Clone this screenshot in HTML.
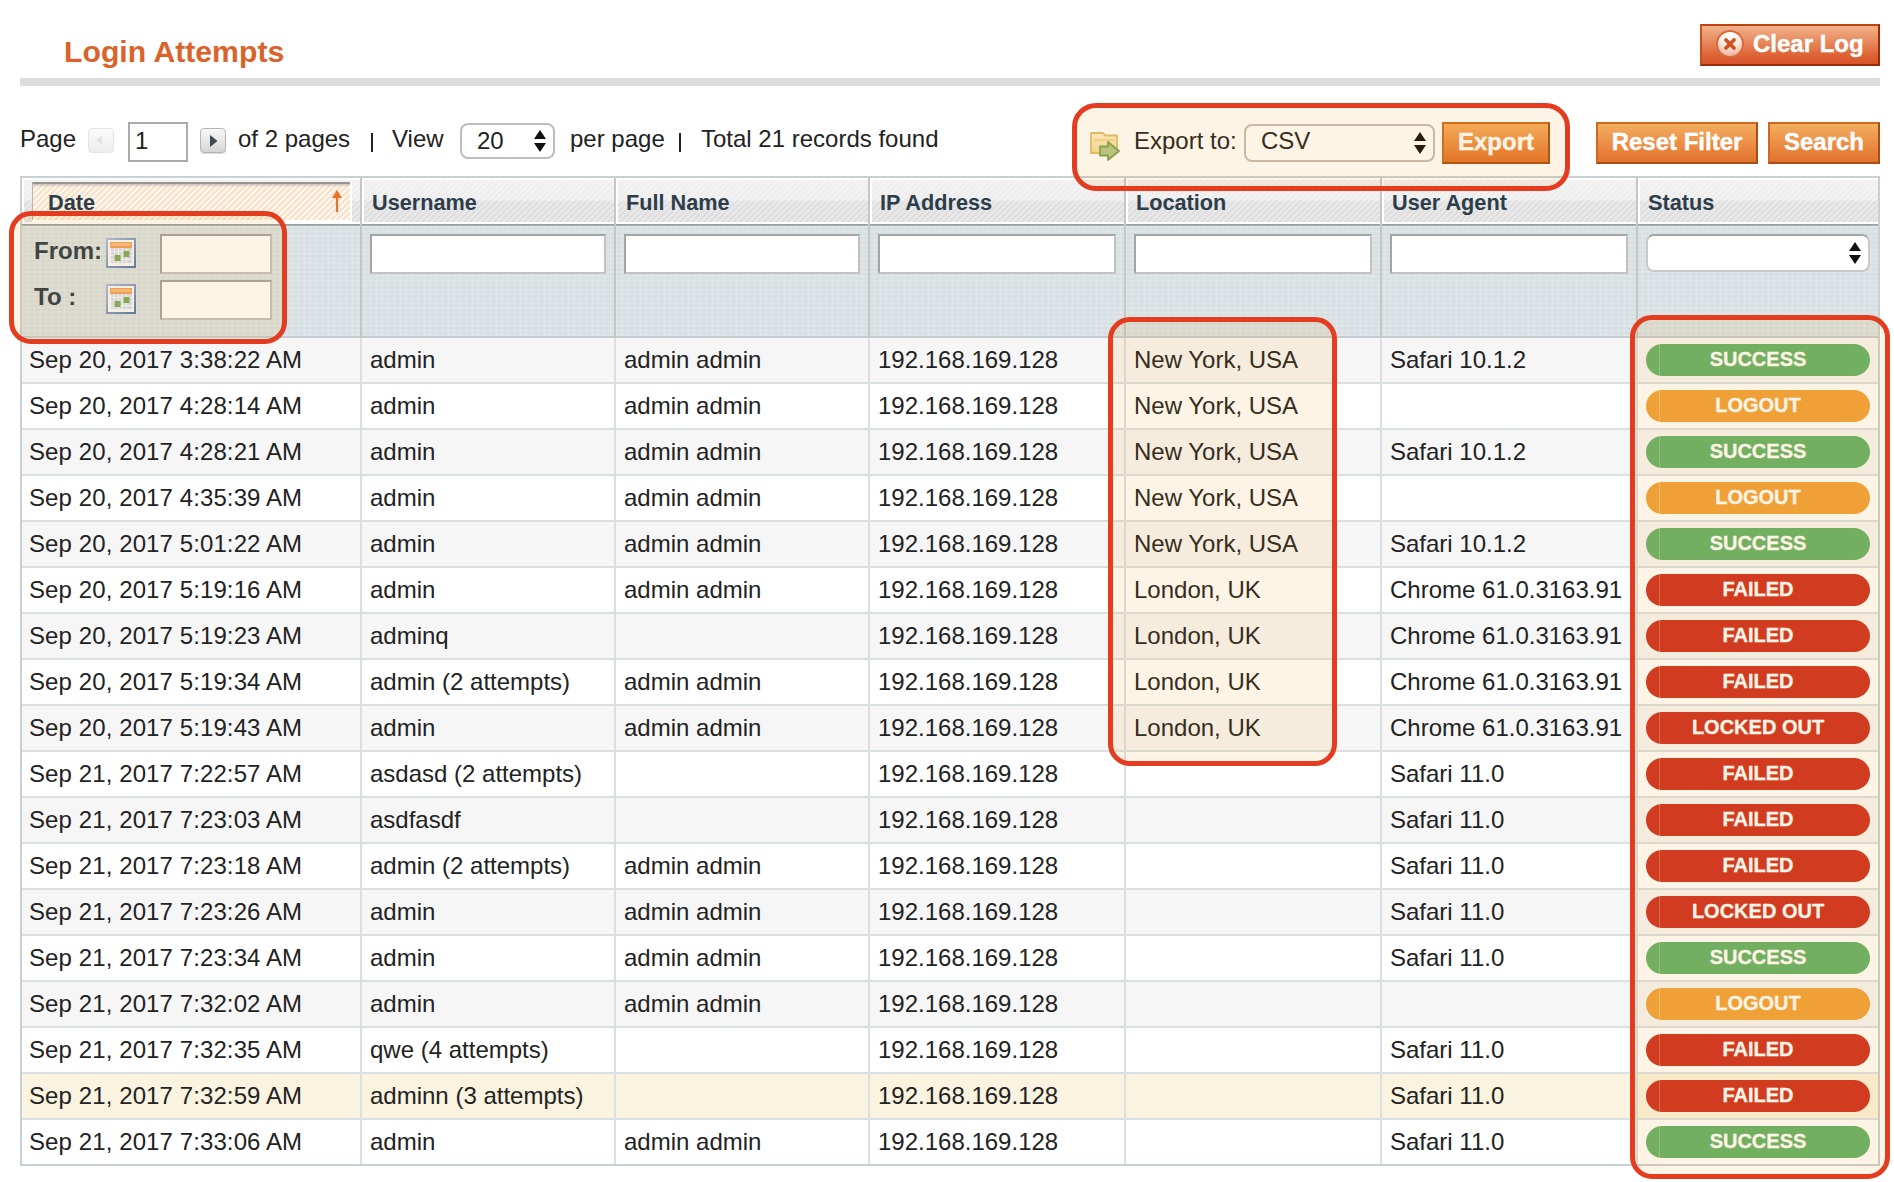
<!DOCTYPE html><html><head><meta charset="utf-8"><title>Login Attempts</title><style>
*{margin:0;padding:0;box-sizing:border-box}
html,body{width:1894px;height:1182px;overflow:hidden;background:#fff}
body{font-family:"Liberation Sans",sans-serif;color:#222222;position:relative}
.a{position:absolute}
.t{position:absolute;white-space:nowrap;font-size:24px;line-height:28px}
.h{position:absolute;white-space:nowrap;font-size:21.7px;line-height:26px;font-weight:bold;color:#2d3d4a}
.btn{position:absolute;border:2px solid #d0691f;border-right-color:#a84f14;border-bottom-color:#a84f14;
 background:linear-gradient(#f3ae5f,#eb8c45 55%,#e2722c);color:#fff;font-weight:bold;font-size:24px;line-height:36px;text-align:center;white-space:nowrap;-webkit-text-stroke:0.4px #fff}
.inp{position:absolute;background:#fff;border:2px solid #c2c2c2;border-top-color:#a4a4a4;border-left-color:#a4a4a4}
.hl{position:absolute;border:5px solid #e43c21;border-radius:22px;background:rgba(235,145,5,0.10)}
.stripe{background-image:repeating-linear-gradient(135deg,rgba(255,255,255,.35) 0,rgba(255,255,255,.35) 1.6px,rgba(255,255,255,0) 2.6px,rgba(255,255,255,0) 3.6px,rgba(255,255,255,.35) 4.24px)}
.dots{background-color:#d6dfe2;background-image:linear-gradient(90deg,rgba(255,255,255,.18) 1.5px,transparent 1.5px),linear-gradient(rgba(255,255,255,.18) 1.5px,transparent 1.5px);background-size:6px 4.5px}
.bdg{position:absolute;left:1646px;width:224px;height:32px;border-radius:16px;color:#fff;font-weight:bold;font-size:20px;line-height:30px;text-align:center;-webkit-text-stroke:0.3px #fff}
</style></head><body>
<div class="t" style="left:64px;top:35px;font-size:30.2px;line-height:34px;font-weight:bold;color:#d9632a">Login Attempts</div>
<div class="a" style="left:20px;top:78px;width:1860px;height:8px;background:#dddddd"></div>
<div class="btn" style="left:1700px;top:24px;width:180px;height:42px;border-color:#bf4312 #9a2c0c #9a2c0c #c4511f;background:linear-gradient(#f1b189,#e6865a 45%,#dd6536 75%,#d8532a)"><svg class="a" style="left:14px;top:4px" width="28" height="28" viewBox="0 0 28 28"><defs><radialGradient id="cg" cx="50%" cy="20%" r="80%"><stop offset="0" stop-color="#ffffff"/><stop offset="0.5" stop-color="#f9ebe6"/><stop offset="1" stop-color="#eeb09c"/></radialGradient></defs><circle cx="14" cy="14" r="13" fill="none" stroke="#d96a40" stroke-width="2"/><circle cx="14" cy="14" r="12" fill="url(#cg)"/><path d="M10 10 L18 18 M18 10 L10 18" stroke="#d0541f" stroke-width="3.8" stroke-linecap="round"/></svg><span style="position:absolute;left:51px;top:0">Clear Log</span></div>
<div class="t" style="left:20px;top:125px">Page</div>
<div class="a" style="left:88px;top:128px;width:26px;height:25px;border-radius:4px;background:linear-gradient(#fbfbfb,#ededed);border:1px solid #e4e4e4"></div>
<svg class="a" style="left:96px;top:135px" width="8" height="11" viewBox="0 0 8 11"><path d="M6 0 L0 5 L6 10 Z" fill="#e2e2e2"/></svg>
<div class="inp" style="left:128px;top:122px;width:60px;height:40px;border-color:#ababab"></div>
<div class="t" style="left:135px;top:127px">1</div>
<div class="a" style="left:200px;top:128px;width:26px;height:25px;border-radius:4px;background:linear-gradient(#f8f8f8,#d5d5d5);border:1px solid #b5b5b5;box-shadow:0 1px 0 #ddd"></div>
<svg class="a" style="left:210px;top:135px" width="8" height="12" viewBox="0 0 8 12"><path d="M0 0 L7.5 6 L0 12 Z" fill="#3b4a53"/></svg>
<div class="t" style="left:238px;top:125px">of 2 pages</div>
<div class="a" style="left:371px;top:133px;width:2px;height:19px;background:#222222"></div>
<div class="t" style="left:392px;top:125px">View</div>
<div class="a" style="left:460px;top:123px;width:95px;height:36px;border-radius:8px;border:2px solid #bdbdbd;background:#fff"></div>
<div class="t" style="left:477px;top:127px">20</div>
<svg class="a" style="left:534px;top:130px" width="12" height="22" viewBox="0 0 12 22"><path d="M6 0 L12 9 L0 9 Z M0 13 L12 13 L6 22 Z" fill="#111"/></svg>
<div class="t" style="left:570px;top:125px">per page</div>
<div class="a" style="left:679px;top:133px;width:2px;height:19px;background:#222222"></div>
<div class="t" style="left:701px;top:125px">Total 21 records found</div>
<svg class="a" style="left:1089px;top:131px" width="32" height="30" viewBox="0 0 32 30"><defs><linearGradient id="fg" x1="0" y1="0" x2="0" y2="1"><stop offset="0" stop-color="#fbf1d6"/><stop offset="1" stop-color="#f5dc94"/></linearGradient></defs><path d="M2 2 H14 L16 4.5 H28 V22 H2 Z" fill="url(#fg)" stroke="#e2bd6c" stroke-width="1.8" stroke-linejoin="round"/><path d="M5 9 H26" stroke="#f2d98f" stroke-width="2.5"/><path d="M11 15.5 H19 V11 L30 20 L19 29 V24.5 H11 Z" fill="#b4c98c" stroke="#7ea451" stroke-width="1.8" stroke-linejoin="round"/></svg>
<div class="t" style="left:1134px;top:127px">Export to:</div>
<div class="a" style="left:1244px;top:124px;width:191px;height:38px;border-radius:8px;border:2px solid #c4beb5;background:#fff"></div>
<div class="t" style="left:1261px;top:127px">CSV</div>
<svg class="a" style="left:1414px;top:132px" width="12" height="22" viewBox="0 0 12 22"><path d="M6 0 L12 9 L0 9 Z M0 13 L12 13 L6 22 Z" fill="#111"/></svg>
<div class="btn" style="left:1442px;top:122px;width:108px;height:42px">Export</div>
<div class="btn" style="left:1596px;top:122px;width:162px;height:42px">Reset Filter</div>
<div class="btn" style="left:1768px;top:122px;width:112px;height:42px">Search</div>
<div class="a" style="left:20px;top:176px;width:1860px;height:990px;border:2px solid #c7d0d3;background:#fff"></div>
<div class="a" style="left:22px;top:178px;width:1856px;height:46px;background:linear-gradient(#eeeeee,#ececec 47%,#dedede 52%,#dcdcdc);border-top:2px solid #fff;border-bottom:2px solid #fff"></div>
<div class="a stripe" style="left:22px;top:180px;width:1856px;height:42px"></div>
<div class="a" style="left:22px;top:224px;width:1856px;height:2px;background:linear-gradient(#8f9697,#b3babc)"></div>
<div class="a dots" style="left:22px;top:226px;width:1856px;height:110px"></div>
<div class="a" style="left:22px;top:336px;width:1856px;height:2px;background:#c5cccf"></div>
<div class="a" style="left:22px;top:178px;width:2px;height:46px;background:#fff"></div>
<div class="a" style="left:362px;top:178px;width:2px;height:46px;background:#fff"></div>
<div class="a" style="left:616px;top:178px;width:2px;height:46px;background:#fff"></div>
<div class="a" style="left:870px;top:178px;width:2px;height:46px;background:#fff"></div>
<div class="a" style="left:1126px;top:178px;width:2px;height:46px;background:#fff"></div>
<div class="a" style="left:1382px;top:178px;width:2px;height:46px;background:#fff"></div>
<div class="a" style="left:1638px;top:178px;width:2px;height:46px;background:#fff"></div>
<div class="a" style="left:360px;top:178px;width:2px;height:160px;background:#c6c6c6"></div>
<div class="a" style="left:614px;top:178px;width:2px;height:160px;background:#c6c6c6"></div>
<div class="a" style="left:868px;top:178px;width:2px;height:160px;background:#c6c6c6"></div>
<div class="a" style="left:1124px;top:178px;width:2px;height:160px;background:#c6c6c6"></div>
<div class="a" style="left:1380px;top:178px;width:2px;height:160px;background:#c6c6c6"></div>
<div class="a" style="left:1636px;top:178px;width:2px;height:160px;background:#c6c6c6"></div>
<div class="a" style="left:32px;top:182px;width:318px;height:38px;background-color:#f7e3cb;background-image:repeating-linear-gradient(135deg,rgba(255,250,242,.85) 0 2px,rgba(255,255,255,0) 2px 4.24px);border-top:2px solid #959595;border-left:1px solid #b5b5b5"></div>
<div class="a" style="left:33px;top:184px;width:317px;height:3px;background:linear-gradient(rgba(150,150,150,.5),rgba(150,150,150,0))"></div>
<div class="a" style="left:350px;top:182px;width:2px;height:40px;background:#fff"></div>
<div class="a" style="left:32px;top:220px;width:320px;height:2px;background:#fff"></div>
<div class="h" style="left:48px;top:190px">Date</div>
<svg class="a" style="left:332px;top:190px" width="10" height="22" viewBox="0 0 10 22"><path d="M5 0 L10 8 H6.1 V22 H3.9 V8 H0 Z" fill="#e8732f"/></svg>
<div class="h" style="left:372px;top:190px">Username</div>
<div class="h" style="left:626px;top:190px">Full Name</div>
<div class="h" style="left:880px;top:190px">IP Address</div>
<div class="h" style="left:1136px;top:190px">Location</div>
<div class="h" style="left:1392px;top:190px">User Agent</div>
<div class="h" style="left:1648px;top:190px">Status</div>
<div class="t" style="left:34px;top:237px;font-weight:bold;color:#2d3d4a">From:</div>
<div class="t" style="left:34px;top:283px;font-weight:bold;color:#2d3d4a">To :</div>
<svg class="a" style="left:106px;top:238px" width="30" height="30" viewBox="0 0 30 30"><defs><linearGradient id="cb1" x1="0" y1="0" x2="1" y2="1"><stop offset="0" stop-color="#a9bde0"/><stop offset="1" stop-color="#5676ad"/></linearGradient></defs><rect x="1" y="1" width="28" height="28" fill="#f7f9fc" stroke="url(#cb1)" stroke-width="2"/><rect x="5" y="10" width="21" height="15" fill="#d4def0"/><path d="M5 13.5 H26 M5 17.5 H26 M5 21.5 H26 M8.5 10 V25 M12.5 10 V25 M16.5 10 V25 M20.5 10 V25" stroke="#f4f6fb" stroke-width="1.2"/><rect x="4" y="4" width="22" height="6" fill="#f0a060"/><rect x="5" y="5" width="20" height="3" fill="#f5bb80"/><rect x="8.5" y="17" width="6" height="6" fill="#7fac5e"/><rect x="17.5" y="13" width="6" height="6" fill="#7fac5e"/></svg>
<svg class="a" style="left:106px;top:284px" width="30" height="30" viewBox="0 0 30 30"><defs><linearGradient id="cb2" x1="0" y1="0" x2="1" y2="1"><stop offset="0" stop-color="#a9bde0"/><stop offset="1" stop-color="#5676ad"/></linearGradient></defs><rect x="1" y="1" width="28" height="28" fill="#f7f9fc" stroke="url(#cb2)" stroke-width="2"/><rect x="5" y="10" width="21" height="15" fill="#d4def0"/><path d="M5 13.5 H26 M5 17.5 H26 M5 21.5 H26 M8.5 10 V25 M12.5 10 V25 M16.5 10 V25 M20.5 10 V25" stroke="#f4f6fb" stroke-width="1.2"/><rect x="4" y="4" width="22" height="6" fill="#f0a060"/><rect x="5" y="5" width="20" height="3" fill="#f5bb80"/><rect x="8.5" y="17" width="6" height="6" fill="#7fac5e"/><rect x="17.5" y="13" width="6" height="6" fill="#7fac5e"/></svg>
<div class="inp" style="left:160px;top:234px;width:112px;height:40px"></div>
<div class="inp" style="left:160px;top:280px;width:112px;height:40px"></div>
<div class="inp" style="left:370px;top:234px;width:236px;height:40px"></div>
<div class="inp" style="left:624px;top:234px;width:236px;height:40px"></div>
<div class="inp" style="left:878px;top:234px;width:238px;height:40px"></div>
<div class="inp" style="left:1134px;top:234px;width:238px;height:40px"></div>
<div class="inp" style="left:1390px;top:234px;width:238px;height:40px"></div>
<div class="a" style="left:1646px;top:234px;width:224px;height:38px;border-radius:8px;border:2px solid #c8c8c8;border-top-color:#a6a6a6;background:#fff"></div>
<svg class="a" style="left:1849px;top:242px" width="12" height="22" viewBox="0 0 12 22"><path d="M6 0 L12 9 L0 9 Z M0 13 L12 13 L6 22 Z" fill="#111"/></svg>
<div class="a" style="left:22px;top:338px;width:1856px;height:44px;background:#f6f6f6"></div>
<div class="a" style="left:22px;top:382px;width:1856px;height:2px;background:#dadfe1"></div>
<div class="a" style="left:22px;top:384px;width:1856px;height:44px;background:#ffffff"></div>
<div class="a" style="left:22px;top:428px;width:1856px;height:2px;background:#dadfe1"></div>
<div class="a" style="left:22px;top:430px;width:1856px;height:44px;background:#f6f6f6"></div>
<div class="a" style="left:22px;top:474px;width:1856px;height:2px;background:#dadfe1"></div>
<div class="a" style="left:22px;top:476px;width:1856px;height:44px;background:#ffffff"></div>
<div class="a" style="left:22px;top:520px;width:1856px;height:2px;background:#dadfe1"></div>
<div class="a" style="left:22px;top:522px;width:1856px;height:44px;background:#f6f6f6"></div>
<div class="a" style="left:22px;top:566px;width:1856px;height:2px;background:#dadfe1"></div>
<div class="a" style="left:22px;top:568px;width:1856px;height:44px;background:#ffffff"></div>
<div class="a" style="left:22px;top:612px;width:1856px;height:2px;background:#dadfe1"></div>
<div class="a" style="left:22px;top:614px;width:1856px;height:44px;background:#f6f6f6"></div>
<div class="a" style="left:22px;top:658px;width:1856px;height:2px;background:#dadfe1"></div>
<div class="a" style="left:22px;top:660px;width:1856px;height:44px;background:#ffffff"></div>
<div class="a" style="left:22px;top:704px;width:1856px;height:2px;background:#dadfe1"></div>
<div class="a" style="left:22px;top:706px;width:1856px;height:44px;background:#f6f6f6"></div>
<div class="a" style="left:22px;top:750px;width:1856px;height:2px;background:#dadfe1"></div>
<div class="a" style="left:22px;top:752px;width:1856px;height:44px;background:#ffffff"></div>
<div class="a" style="left:22px;top:796px;width:1856px;height:2px;background:#dadfe1"></div>
<div class="a" style="left:22px;top:798px;width:1856px;height:44px;background:#f6f6f6"></div>
<div class="a" style="left:22px;top:842px;width:1856px;height:2px;background:#dadfe1"></div>
<div class="a" style="left:22px;top:844px;width:1856px;height:44px;background:#ffffff"></div>
<div class="a" style="left:22px;top:888px;width:1856px;height:2px;background:#dadfe1"></div>
<div class="a" style="left:22px;top:890px;width:1856px;height:44px;background:#f6f6f6"></div>
<div class="a" style="left:22px;top:934px;width:1856px;height:2px;background:#dadfe1"></div>
<div class="a" style="left:22px;top:936px;width:1856px;height:44px;background:#ffffff"></div>
<div class="a" style="left:22px;top:980px;width:1856px;height:2px;background:#dadfe1"></div>
<div class="a" style="left:22px;top:982px;width:1856px;height:44px;background:#f6f6f6"></div>
<div class="a" style="left:22px;top:1026px;width:1856px;height:2px;background:#dadfe1"></div>
<div class="a" style="left:22px;top:1028px;width:1856px;height:44px;background:#ffffff"></div>
<div class="a" style="left:22px;top:1072px;width:1856px;height:2px;background:#dadfe1"></div>
<div class="a" style="left:22px;top:1074px;width:1856px;height:44px;background:#faf3df"></div>
<div class="a" style="left:22px;top:1118px;width:1856px;height:2px;background:#dadfe1"></div>
<div class="a" style="left:22px;top:1120px;width:1856px;height:44px;background:#ffffff"></div>
<div class="a" style="left:360px;top:338px;width:2px;height:826px;background:#dadfe1"></div>
<div class="a" style="left:614px;top:338px;width:2px;height:826px;background:#dadfe1"></div>
<div class="a" style="left:868px;top:338px;width:2px;height:826px;background:#dadfe1"></div>
<div class="a" style="left:1124px;top:338px;width:2px;height:826px;background:#dadfe1"></div>
<div class="a" style="left:1380px;top:338px;width:2px;height:826px;background:#dadfe1"></div>
<div class="a" style="left:1636px;top:338px;width:2px;height:826px;background:#dadfe1"></div>
<div class="t" style="left:29px;top:346px;letter-spacing:0.1px">Sep 20, 2017 3:38:22 AM</div>
<div class="t" style="left:370px;top:346px">admin</div>
<div class="t" style="left:624px;top:346px">admin admin</div>
<div class="t" style="left:878px;top:346px">192.168.169.128</div>
<div class="t" style="left:1134px;top:346px">New York, USA</div>
<div class="t" style="left:1390px;top:346px">Safari 10.1.2</div>
<div class="bdg" style="top:344px;background:#66b36b">SUCCESS</div>
<div class="a" style="left:1659px;top:344px;width:1px;height:32px;background:rgba(255,255,255,.25)"></div>
<div class="t" style="left:29px;top:392px;letter-spacing:0.1px">Sep 20, 2017 4:28:14 AM</div>
<div class="t" style="left:370px;top:392px">admin</div>
<div class="t" style="left:624px;top:392px">admin admin</div>
<div class="t" style="left:878px;top:392px">192.168.169.128</div>
<div class="t" style="left:1134px;top:392px">New York, USA</div>
<div class="bdg" style="top:390px;background:#f0a23c">LOGOUT</div>
<div class="a" style="left:1659px;top:390px;width:1px;height:32px;background:rgba(255,255,255,.25)"></div>
<div class="t" style="left:29px;top:438px;letter-spacing:0.1px">Sep 20, 2017 4:28:21 AM</div>
<div class="t" style="left:370px;top:438px">admin</div>
<div class="t" style="left:624px;top:438px">admin admin</div>
<div class="t" style="left:878px;top:438px">192.168.169.128</div>
<div class="t" style="left:1134px;top:438px">New York, USA</div>
<div class="t" style="left:1390px;top:438px">Safari 10.1.2</div>
<div class="bdg" style="top:436px;background:#66b36b">SUCCESS</div>
<div class="a" style="left:1659px;top:436px;width:1px;height:32px;background:rgba(255,255,255,.25)"></div>
<div class="t" style="left:29px;top:484px;letter-spacing:0.1px">Sep 20, 2017 4:35:39 AM</div>
<div class="t" style="left:370px;top:484px">admin</div>
<div class="t" style="left:624px;top:484px">admin admin</div>
<div class="t" style="left:878px;top:484px">192.168.169.128</div>
<div class="t" style="left:1134px;top:484px">New York, USA</div>
<div class="bdg" style="top:482px;background:#f0a23c">LOGOUT</div>
<div class="a" style="left:1659px;top:482px;width:1px;height:32px;background:rgba(255,255,255,.25)"></div>
<div class="t" style="left:29px;top:530px;letter-spacing:0.1px">Sep 20, 2017 5:01:22 AM</div>
<div class="t" style="left:370px;top:530px">admin</div>
<div class="t" style="left:624px;top:530px">admin admin</div>
<div class="t" style="left:878px;top:530px">192.168.169.128</div>
<div class="t" style="left:1134px;top:530px">New York, USA</div>
<div class="t" style="left:1390px;top:530px">Safari 10.1.2</div>
<div class="bdg" style="top:528px;background:#66b36b">SUCCESS</div>
<div class="a" style="left:1659px;top:528px;width:1px;height:32px;background:rgba(255,255,255,.25)"></div>
<div class="t" style="left:29px;top:576px;letter-spacing:0.1px">Sep 20, 2017 5:19:16 AM</div>
<div class="t" style="left:370px;top:576px">admin</div>
<div class="t" style="left:624px;top:576px">admin admin</div>
<div class="t" style="left:878px;top:576px">192.168.169.128</div>
<div class="t" style="left:1134px;top:576px">London, UK</div>
<div class="t" style="left:1390px;top:576px">Chrome 61.0.3163.91</div>
<div class="bdg" style="top:574px;background:#cf3324">FAILED</div>
<div class="a" style="left:1659px;top:574px;width:1px;height:32px;background:rgba(255,255,255,.25)"></div>
<div class="t" style="left:29px;top:622px;letter-spacing:0.1px">Sep 20, 2017 5:19:23 AM</div>
<div class="t" style="left:370px;top:622px">adminq</div>
<div class="t" style="left:878px;top:622px">192.168.169.128</div>
<div class="t" style="left:1134px;top:622px">London, UK</div>
<div class="t" style="left:1390px;top:622px">Chrome 61.0.3163.91</div>
<div class="bdg" style="top:620px;background:#cf3324">FAILED</div>
<div class="a" style="left:1659px;top:620px;width:1px;height:32px;background:rgba(255,255,255,.25)"></div>
<div class="t" style="left:29px;top:668px;letter-spacing:0.1px">Sep 20, 2017 5:19:34 AM</div>
<div class="t" style="left:370px;top:668px">admin (2 attempts)</div>
<div class="t" style="left:624px;top:668px">admin admin</div>
<div class="t" style="left:878px;top:668px">192.168.169.128</div>
<div class="t" style="left:1134px;top:668px">London, UK</div>
<div class="t" style="left:1390px;top:668px">Chrome 61.0.3163.91</div>
<div class="bdg" style="top:666px;background:#cf3324">FAILED</div>
<div class="a" style="left:1659px;top:666px;width:1px;height:32px;background:rgba(255,255,255,.25)"></div>
<div class="t" style="left:29px;top:714px;letter-spacing:0.1px">Sep 20, 2017 5:19:43 AM</div>
<div class="t" style="left:370px;top:714px">admin</div>
<div class="t" style="left:624px;top:714px">admin admin</div>
<div class="t" style="left:878px;top:714px">192.168.169.128</div>
<div class="t" style="left:1134px;top:714px">London, UK</div>
<div class="t" style="left:1390px;top:714px">Chrome 61.0.3163.91</div>
<div class="bdg" style="top:712px;background:#cf3324">LOCKED OUT</div>
<div class="a" style="left:1659px;top:712px;width:1px;height:32px;background:rgba(255,255,255,.25)"></div>
<div class="t" style="left:29px;top:760px;letter-spacing:0.1px">Sep 21, 2017 7:22:57 AM</div>
<div class="t" style="left:370px;top:760px">asdasd (2 attempts)</div>
<div class="t" style="left:878px;top:760px">192.168.169.128</div>
<div class="t" style="left:1390px;top:760px">Safari 11.0</div>
<div class="bdg" style="top:758px;background:#cf3324">FAILED</div>
<div class="a" style="left:1659px;top:758px;width:1px;height:32px;background:rgba(255,255,255,.25)"></div>
<div class="t" style="left:29px;top:806px;letter-spacing:0.1px">Sep 21, 2017 7:23:03 AM</div>
<div class="t" style="left:370px;top:806px">asdfasdf</div>
<div class="t" style="left:878px;top:806px">192.168.169.128</div>
<div class="t" style="left:1390px;top:806px">Safari 11.0</div>
<div class="bdg" style="top:804px;background:#cf3324">FAILED</div>
<div class="a" style="left:1659px;top:804px;width:1px;height:32px;background:rgba(255,255,255,.25)"></div>
<div class="t" style="left:29px;top:852px;letter-spacing:0.1px">Sep 21, 2017 7:23:18 AM</div>
<div class="t" style="left:370px;top:852px">admin (2 attempts)</div>
<div class="t" style="left:624px;top:852px">admin admin</div>
<div class="t" style="left:878px;top:852px">192.168.169.128</div>
<div class="t" style="left:1390px;top:852px">Safari 11.0</div>
<div class="bdg" style="top:850px;background:#cf3324">FAILED</div>
<div class="a" style="left:1659px;top:850px;width:1px;height:32px;background:rgba(255,255,255,.25)"></div>
<div class="t" style="left:29px;top:898px;letter-spacing:0.1px">Sep 21, 2017 7:23:26 AM</div>
<div class="t" style="left:370px;top:898px">admin</div>
<div class="t" style="left:624px;top:898px">admin admin</div>
<div class="t" style="left:878px;top:898px">192.168.169.128</div>
<div class="t" style="left:1390px;top:898px">Safari 11.0</div>
<div class="bdg" style="top:896px;background:#cf3324">LOCKED OUT</div>
<div class="a" style="left:1659px;top:896px;width:1px;height:32px;background:rgba(255,255,255,.25)"></div>
<div class="t" style="left:29px;top:944px;letter-spacing:0.1px">Sep 21, 2017 7:23:34 AM</div>
<div class="t" style="left:370px;top:944px">admin</div>
<div class="t" style="left:624px;top:944px">admin admin</div>
<div class="t" style="left:878px;top:944px">192.168.169.128</div>
<div class="t" style="left:1390px;top:944px">Safari 11.0</div>
<div class="bdg" style="top:942px;background:#66b36b">SUCCESS</div>
<div class="a" style="left:1659px;top:942px;width:1px;height:32px;background:rgba(255,255,255,.25)"></div>
<div class="t" style="left:29px;top:990px;letter-spacing:0.1px">Sep 21, 2017 7:32:02 AM</div>
<div class="t" style="left:370px;top:990px">admin</div>
<div class="t" style="left:624px;top:990px">admin admin</div>
<div class="t" style="left:878px;top:990px">192.168.169.128</div>
<div class="bdg" style="top:988px;background:#f0a23c">LOGOUT</div>
<div class="a" style="left:1659px;top:988px;width:1px;height:32px;background:rgba(255,255,255,.25)"></div>
<div class="t" style="left:29px;top:1036px;letter-spacing:0.1px">Sep 21, 2017 7:32:35 AM</div>
<div class="t" style="left:370px;top:1036px">qwe (4 attempts)</div>
<div class="t" style="left:878px;top:1036px">192.168.169.128</div>
<div class="t" style="left:1390px;top:1036px">Safari 11.0</div>
<div class="bdg" style="top:1034px;background:#cf3324">FAILED</div>
<div class="a" style="left:1659px;top:1034px;width:1px;height:32px;background:rgba(255,255,255,.25)"></div>
<div class="t" style="left:29px;top:1082px;letter-spacing:0.1px">Sep 21, 2017 7:32:59 AM</div>
<div class="t" style="left:370px;top:1082px">adminn (3 attempts)</div>
<div class="t" style="left:878px;top:1082px">192.168.169.128</div>
<div class="t" style="left:1390px;top:1082px">Safari 11.0</div>
<div class="bdg" style="top:1080px;background:#cf3324">FAILED</div>
<div class="a" style="left:1659px;top:1080px;width:1px;height:32px;background:rgba(255,255,255,.25)"></div>
<div class="t" style="left:29px;top:1128px;letter-spacing:0.1px">Sep 21, 2017 7:33:06 AM</div>
<div class="t" style="left:370px;top:1128px">admin</div>
<div class="t" style="left:624px;top:1128px">admin admin</div>
<div class="t" style="left:878px;top:1128px">192.168.169.128</div>
<div class="t" style="left:1390px;top:1128px">Safari 11.0</div>
<div class="bdg" style="top:1126px;background:#66b36b">SUCCESS</div>
<div class="a" style="left:1659px;top:1126px;width:1px;height:32px;background:rgba(255,255,255,.25)"></div>
<div class="hl" style="left:9px;top:211px;width:278px;height:133px"></div>
<div class="hl" style="left:1072px;top:103px;width:498px;height:88px;border-radius:24px"></div>
<div class="hl" style="left:1108px;top:317px;width:229px;height:449px"></div>
<div class="hl" style="left:1630px;top:315px;width:260px;height:864px"></div>
</body></html>
